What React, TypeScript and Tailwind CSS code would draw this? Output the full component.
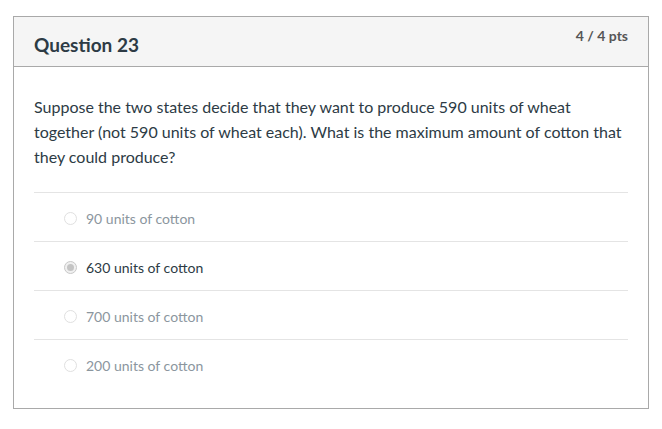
import React from "react";

const answers = [
  { label: "90 units of cotton", selected: false },
  { label: "630 units of cotton", selected: true },
  { label: "700 units of cotton", selected: false },
  { label: "200 units of cotton", selected: false },
];

export default function App() {
  return (
    <div className="w-[662px] h-[429px] bg-white pt-4 pl-[13px]" style={{ fontFamily: "Lato, 'Noto Sans', sans-serif" }}>
      <div className="w-[636px] border border-[#a9a9a9]">
        <div className="flex h-[50px] justify-between border-b border-[#a9a9a9] bg-[#f5f5f5] px-5">
          <div className="pt-[15px] text-[19px] font-bold leading-[25px] text-[#2d3b45]">Question 23</div>
          <div className="pt-[9px] text-[14px] font-bold leading-[20px] text-[#555]">4 / 4 pts</div>
        </div>
        <div className="px-5 pb-5">
          <p className="pt-[27px] pb-[23px] text-[16px] leading-[25px] text-[#2d3b45]">
            Suppose the two states decide that they want to produce 590 units of wheat together (not 590 units of wheat each). What is the maximum amount of cotton that they could produce?
          </p>
          <div>
            {answers.map((a) => (
              <div key={a.label} className="flex h-[49px] items-center border-t border-[#e4e4e4] pl-[30px] pt-[2px]">
                <span
                  className={
                    a.selected
                      ? "flex h-[13px] w-[13px] items-center justify-center rounded-full border border-[#c8c8c8] bg-[#f0f0f0]"
                      : "flex h-[13px] w-[13px] items-center justify-center rounded-full border border-[#e0e0e0] bg-white"
                  }
                >
                  {a.selected && <span className="h-[7px] w-[7px] rounded-full bg-[#c4c4c4]" />}
                </span>
                <span className={a.selected ? "ml-[9px] text-[14px] text-[#2d3b45]" : "ml-[9px] text-[14px] text-[#8b969e]"}>
                  {a.label}
                </span>
              </div>
            ))}
          </div>
        </div>
      </div>
    </div>
  );
}
